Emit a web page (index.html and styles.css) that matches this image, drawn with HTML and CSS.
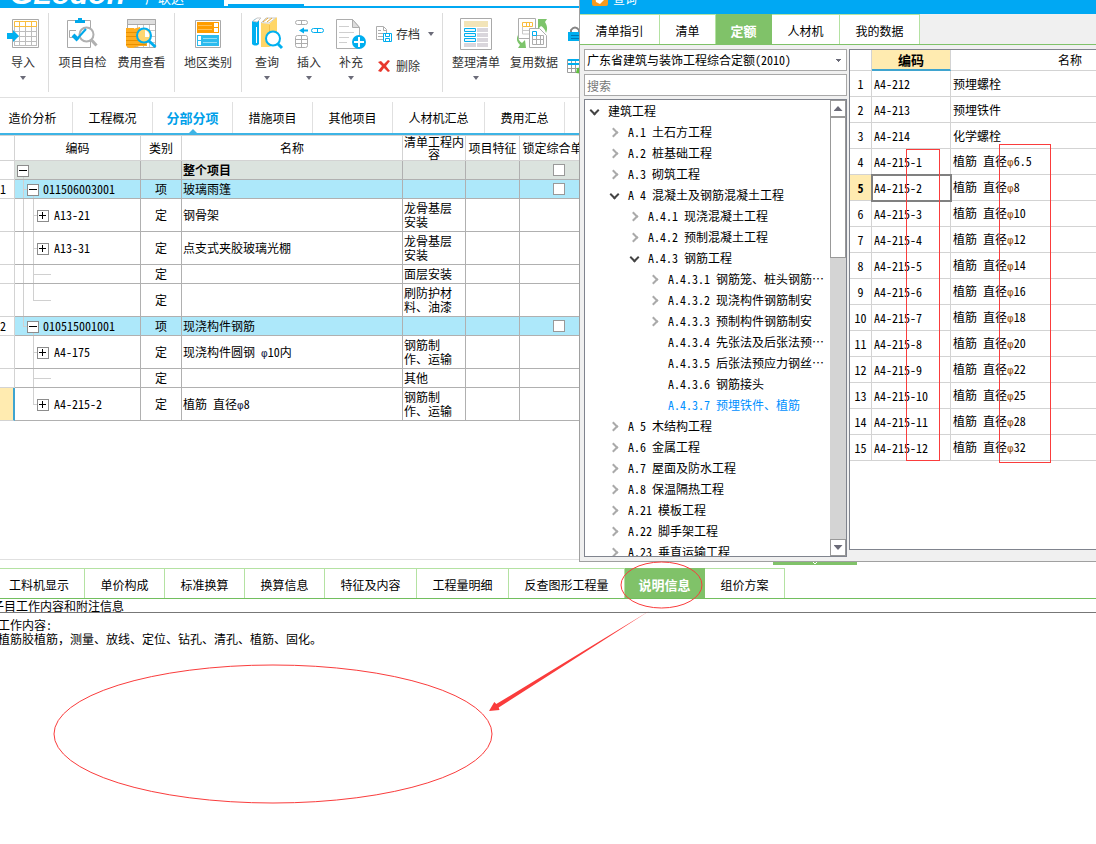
FILE: index.html
```html
<!DOCTYPE html>
<html lang="zh-CN">
<head>
<meta charset="utf-8">
<title>分部分项</title>
<link rel="stylesheet" href="styles.css">
</head>
<body>
<div class="app">
  <header class="titlebar">
    <div class="brand"><span class="brand-latin">GLodon</span><span class="brand-cjk">广联达</span></div>
    <div class="titlebar-notch"></div>
    <div class="titlebar-tab"></div>
    <div class="titlebar-rest"></div>
  </header>

  <div class="toolbar">
    <div class="tool-group group-import">
      <button class="tool"><svg class="tool-icon" viewBox="0 0 36 36"><path fill="#fff" stroke="#a9a9a9" d="M7.500 3.500h26v28h-26z"/><path stroke="#bdbdbd" d="M9 10.500h23M9 15.500h23M9 20.500h23M9 25.500h23M9 29.500h23M9.500 10v20M14.500 10v20M20.500 10v20M26.500 10v20M31.500 10v20"/><path stroke="#f9bd3e" d="M9.500 5.500h22v5h-22zM14.500 5v5M20.500 5v5M26.500 5v5"/><path fill="#00b0f0" d="M2 17h6v-3l6 6-6 6v-3H2z"/></svg><span>导入</span><i class="caret"></i></button>
    </div>
    <div class="tool-group group-check">
      <button class="tool"><svg class="tool-icon" viewBox="0 0 36 36"><path fill="#fff" stroke="#a9a9a9" d="M2.500 4.500h23v27h-23z"/><path fill="#00a8ea" d="M10 7V4h3V2h4v2h3v3z"/><path stroke="#a9a9a9" d="M11 14.500H4.500v7H10"/><circle cx="21.500" cy="18.500" r="7" fill="#fff" stroke="#b0b0b0" stroke-width="2"/><path stroke="#b0b0b0" stroke-width="3" d="m26.500 24 5 5.500"/><path stroke="#00a8ea" stroke-width="2" d="m12 23 9-10"/><path stroke="#00a8ea" stroke-width="4" d="m8 19 5 5"/></svg><span>项目自检</span></button>
      <button class="tool"><svg class="tool-icon" viewBox="0 0 36 36"><path fill="#fff" stroke="#a9a9a9" d="M3.500 3.500h28v28h-28z"/><path fill="#dfdfdf" stroke="#a9a9a9" d="M3.500 3.500h28v5h-28z"/><path stroke="#c8c8c8" d="M4 14.500h27M4 20.500h27M4 26.500h27M13.500 9v22M19.500 9v22M25.500 9v22"/><path fill="#ffad1f" d="M2 12h8v20H5l-3-2zM9 13l7-2v19l-6 1.500zM16 18h7v12h-7z"/><path stroke="#e99000" d="M2 16.500h14M2 20.500h20M2 24.500h20M2 28.500h20"/><circle cx="20" cy="19.500" r="7" fill="#ffd66f" stroke="#00aeef" stroke-width="2"/><path fill="#fff" d="M21 14q5 2 4 7h-4z"/><path stroke="#00aeef" stroke-width="3" d="m25 25 6.500 6"/></svg><span>费用查看</span></button>
    </div>
    <div class="tool-group group-area">
      <button class="tool"><svg class="tool-icon" viewBox="0 0 36 36"><path fill="#fff" stroke="#a9a9a9" d="M5.500 4.500h25v27h-25z"/><path fill="#ff9d00" d="M7 6h22v11H7z"/><path fill="#fff" d="M24 7h4v4h-4zM24 12h4v4h-4z"/><path stroke="#ffc25c" d="M8 9.500h14M8 13.500h14"/><path fill="#2cbbee" d="M7 19h22v11H7z"/><path fill="#fff" d="M8 20h3v4H8zM8 25h3v4H8z"/><path stroke="#90def7" d="M13 22.500h14M13 26.500h14"/></svg><span>地区类别</span></button>
    </div>
    <div class="tool-group group-edit">
      <button class="tool"><svg class="tool-icon" viewBox="0 0 36 36"><path fill="#00b0f0" d="M3 6c1-2 4-4 7-4v26c-2 2-5 2-7 0z"/><path stroke="#fff" d="M7.500 11v16"/><path fill="#fff" stroke="#c8c8c8" d="m4 5 4-3h4l-4 4zM12 7l5-5h10l-7 5z"/><path fill="#ffd668" d="m12 7 8 1 8-7v27l-8 3H12z"/><path stroke="#e3aa35" d="m14 6 5-4M18 6l5-4"/><path stroke="#f0bf4c" d="M20.500 9v20"/><circle cx="24" cy="22.500" r="7" fill="#fff" stroke="#00b0f0" stroke-width="2"/><path stroke="#00b0f0" stroke-width="3" d="m29 28 4 4"/></svg><span>查询</span><i class="caret"></i></button>
      <button class="tool"><svg class="tool-icon" viewBox="0 0 36 36"><g fill="#fff" stroke="#adadad"><rect x="4.500" y="4.500" width="12" height="4" rx="2"/><rect x="4.500" y="19.500" width="12" height="12" rx="2"/><path d="M10.500 4v4M10.500 20v12M5 23.500h12M5 27.500h12"/></g><path fill="#00aeef" d="m8 14.500 5-3v2h4v2h-4v2z"/><rect x="20.500" y="12.500" width="12" height="4" rx="2" fill="#fff" stroke="#00aeef"/><path stroke="#00aeef" d="M26.500 12v5"/></svg><span>插入</span><i class="caret"></i></button>
      <button class="tool"><svg class="tool-icon" viewBox="0 0 36 36"><path fill="#fff" stroke="#adadad" d="M3.500 3.500h16l7 8v21h-23z"/><path fill="#ddd" stroke="#adadad" d="M19.500 3.500v8h7z"/><path stroke="#cfcfcf" d="M6 10.500h10M6 16.500h15M6 21.500h10M6 26.500h8"/><circle cx="26" cy="26" r="7" fill="#00aeef"/><path stroke="#fff" stroke-width="2" d="M21 26h10M26 21v10"/></svg><span>补充</span><i class="caret"></i></button>
      <div class="tool-stack">
        <button class="tool-small"><svg viewBox="0 0 16 16"><path fill="#fff" stroke="#adadad" d="M.5.500h7l3 3v10H.5z"/><path stroke="#adadad" d="M7.500 1v3.500H11M2 4.500h3M2 7.500h6M2 10.500h5"/><path fill="#fff" stroke="#00aeef" d="M7.500 7.500h8v8h-8z"/><path stroke="#00aeef" d="M9.500 8v2.500h4V8M9.500 15v-2.500h4V15"/></svg><span>存档</span><i class="caret"></i></button>
        <button class="tool-small"><svg viewBox="0 0 16 16"><path fill="#e8382d" d="m2 4 3-1 3 3 4-4 2 1-4 5 4 5-2 1-4-4-3 4-3-1 4-5z"/></svg><span>删除</span></button>
      </div>
    </div>
    <div class="tool-group group-data">
      <button class="tool"><svg class="tool-icon" viewBox="0 0 36 36"><path fill="#fff" stroke="#a9a9a9" d="M2.500 2.500h31v31h-31z"/><path fill="#f2e4b8" d="M6 5h24v6H6z"/><path fill="#d9d6dc" d="M19 12h11v4H19zM19 17h11v4H19zM19 22h11v4H19zM19 27h11v4H19zM6 27h12v4H6z"/><path fill="#e7f7fd" stroke="#00aeef" d="M6.500 12.500h11v3h-11zM6.500 17.500h11v3h-11zM6.500 22.500h11v3h-11z"/></svg><span>整理清单</span><i class="caret"></i></button>
      <button class="tool"><svg class="tool-icon" viewBox="0 0 36 36"><path fill="#fff" stroke="#adadad" d="M2.500 2.500h17v20h-17z"/><path stroke="#f9bd3e" d="M6.500 6.500h10v4h-10zM10.500 6v5M13.500 6v5"/><path stroke="#c8c8c8" d="M6.500 11v7h10M6 14.500h10"/><path fill="#fff" stroke="#adadad" d="M13.500 12.500h10l7 7v12h-17z"/><path stroke="#adadad" d="M16.500 19.500h11v9h-11zM16 23.500h11M20.500 19v9M24.500 19v9"/><path stroke="#00aeef" d="M16.500 15.500h4v4h-4z"/><path fill="#7dc46b" d="M22 3h9l-2 3c2 3 3 7 1 11-1-4-3-6-5-7l-3 3zM2 19c0 4 1 6 4 8l3-3 1 8H2l2-3c-3-3-4-6-2-10z"/></svg><span>复用数据</span></button>
      <div class="tool-stack">
        <button class="tool-small" aria-label="锁定"><svg viewBox="0 0 16 16"><path stroke="#858585" stroke-width="2" d="M4 7V4q4-5 8 0v3"/><path fill="#00aeef" d="M1 6h14v9H1z"/><path stroke="#0077b5" d="M4 9.500h8M4 12.500h8"/></svg></button>
        <button class="tool-small" aria-label="表格"><svg viewBox="0 0 16 16"><path fill="#fff" stroke="#9d9d9d" d="M.5 1.500h15v13H.5zM1 6.500h14M1 10.500h14M4.500 2v12M8.500 2v12"/><path stroke="#00aeef" stroke-width="2" d="M1 2h14M1 6h14"/><path fill="#5fbf3d" d="m9 15 1-5 6-1v7z"/></svg></button>
      </div>
    </div>
  </div>

  <nav class="main-tabs">
    <button class="tab">造价分析</button><button class="tab">工程概况</button><button class="tab active">分部分项</button><button class="tab">措施项目</button><button class="tab">其他项目</button><button class="tab wide">人材机汇总</button><button class="tab">费用汇总</button>
  </nav>

  <main class="sheet">
    <table class="bill">
      <colgroup><col class="c-no"><col class="c-code"><col class="c-type"><col class="c-name"><col class="c-work"><col class="c-feat"><col class="c-lock"></colgroup>
      <thead><tr><th></th><th>编码</th><th>类别</th><th>名称</th><th>清单工程内容</th><th>项目特征</th><th>锁定综合单价</th></tr></thead>
      <tbody>
        <tr class="total"><td></td><td class="root"><button class="box" aria-label="折叠"></button></td><td></td><td><b>整个项目</b></td><td></td><td></td><td><input type="checkbox" aria-label="锁定 整个项目"></td></tr>
        <tr class="item"><td>1</td><td class="parent"><button class="box" aria-label="折叠"></button>011506003001</td><td>项</td><td>玻璃雨篷</td><td></td><td></td><td><input type="checkbox" aria-label="锁定 玻璃雨篷"></td></tr>
        <tr class="tall"><td></td><td class="child trunk"><button class="box plus" aria-label="展开"></button>A13-21</td><td>定</td><td>钢骨架</td><td>龙骨基层安装</td><td></td><td></td></tr>
        <tr class="tall"><td></td><td class="child trunk"><button class="box plus" aria-label="展开"></button>A13-31</td><td>定</td><td>点支式夹胶玻璃光棚</td><td>龙骨基层安装</td><td></td><td></td></tr>
        <tr><td></td><td class="leaf trunk"></td><td>定</td><td></td><td>面层安装</td><td></td><td></td></tr>
        <tr class="tall"><td></td><td class="leaf trunk end"></td><td>定</td><td></td><td>刷防护材料、油漆</td><td></td><td></td></tr>
        <tr class="item"><td>2</td><td class="parent end"><button class="box" aria-label="折叠"></button>010515001001</td><td>项</td><td>现浇构件钢筋</td><td></td><td></td><td><input type="checkbox" aria-label="锁定 现浇构件钢筋"></td></tr>
        <tr class="tall"><td></td><td class="child"><button class="box plus" aria-label="展开"></button>A4-175</td><td>定</td><td>现浇构件圆钢 <em>φ</em>10内</td><td>钢筋制作、运输</td><td></td><td></td></tr>
        <tr><td></td><td class="leaf"></td><td>定</td><td></td><td>其他</td><td></td><td></td></tr>
        <tr class="tall current"><td></td><td class="child end"><button class="box plus" aria-label="展开"></button>A4-215-2</td><td>定</td><td>植筋 直径<em>φ</em>8</td><td>钢筋制作、运输</td><td></td><td></td></tr>
      </tbody>
    </table>
  </main>

  <section class="detail">
    <nav class="detail-tabs">
      <button class="dtab">工料机显示</button><button class="dtab">单价构成</button><button class="dtab">标准换算</button><button class="dtab">换算信息</button><button class="dtab">特征及内容</button><button class="dtab">工程量明细</button><button class="dtab">反查图形工程量</button><button class="dtab active">说明信息</button><button class="dtab">组价方案</button>
    </nav>
    <h2 class="detail-title">子目工作内容和附注信息</h2>
    <div class="detail-text">工作内容:<br>植筋胶植筋，测量、放线、定位、钻孔、清孔、植筋、固化。</div>
  </section>
</div>

<div class="grip"><svg viewBox="0 0 8 4"><path fill="none" stroke="#fff" d="m1 0 3 3 3-3"/></svg></div>

<div class="dialog" role="dialog" aria-label="查询">
  <div class="dialog-title"><svg viewBox="0 0 16 16"><rect width="16" height="16" rx="2" fill="#f79a1c"/><path fill="#fff" d="M3 5h4l1 4 3-3 2 3-5 5-4-2z"/></svg><span>查询</span></div>
  <nav class="dialog-tabs">
    <button class="qtab">清单指引</button><button class="qtab">清单</button><button class="qtab active">定额</button><button class="qtab">人材机</button><button class="qtab">我的数据</button>
  </nav>
  <div class="dialog-body">
    <div class="query">
      <select class="field picker" aria-label="定额库"><option>广东省建筑与装饰工程综合定额(2010)</option></select>
      <input class="field" type="text" placeholder="搜索" aria-label="搜索">
      <div class="tree-pane">
        <ul class="tree">
          <li class="open">建筑工程</li>
          <li class="l1 closed">A.1 土石方工程</li>
          <li class="l1 closed">A.2 桩基础工程</li>
          <li class="l1 closed">A.3 砌筑工程</li>
          <li class="l1 open">A 4 混凝土及钢筋混凝土工程</li>
          <li class="l2 closed">A.4.1 现浇混凝土工程</li>
          <li class="l2 closed">A.4.2 预制混凝土工程</li>
          <li class="l2 open">A.4.3 钢筋工程</li>
          <li class="l3 closed">A.4.3.1 钢筋笼、桩头钢筋⋯</li>
          <li class="l3 closed">A.4.3.2 现浇构件钢筋制安</li>
          <li class="l3 closed">A.4.3.3 预制构件钢筋制安</li>
          <li class="l3">A.4.3.4 先张法及后张法预⋯</li>
          <li class="l3">A.4.3.5 后张法预应力钢丝⋯</li>
          <li class="l3">A.4.3.6 钢筋接头</li>
          <li class="l3 chosen">A.4.3.7 预埋铁件、植筋</li>
          <li class="l1 closed">A 5 木结构工程</li>
          <li class="l1 closed">A.6 金属工程</li>
          <li class="l1 closed">A.7 屋面及防水工程</li>
          <li class="l1 closed">A.8 保温隔热工程</li>
          <li class="l1 closed">A.21 模板工程</li>
          <li class="l1 closed">A.22 脚手架工程</li>
          <li class="l1 closed">A.23 垂直运输工程</li>
        </ul>
        <div class="scroll">
          <button class="scroll-btn" aria-label="向上"><i class="up"></i></button>
          <div class="thumb"></div>
          <div class="track"></div>
          <button class="scroll-btn" aria-label="向下"><i class="down"></i></button>
        </div>
      </div>
    </div>
    <div class="result-pane">
      <table class="result">
        <colgroup><col class="r-no"><col class="r-code"><col class="r-name"></colgroup>
        <thead><tr><th></th><th class="sorted">编码</th><th>名称</th></tr></thead>
        <tbody>
          <tr><td>1</td><td>A4-212</td><td>预埋螺栓</td></tr>
          <tr><td>2</td><td>A4-213</td><td>预埋铁件</td></tr>
          <tr><td>3</td><td>A4-214</td><td>化学螺栓</td></tr>
          <tr><td>4</td><td>A4-215-1</td><td>植筋 直径<em>φ</em>6.5</td></tr>
          <tr class="picked"><td>5</td><td>A4-215-2</td><td>植筋 直径<em>φ</em>8</td></tr>
          <tr><td>6</td><td>A4-215-3</td><td>植筋 直径<em>φ</em>10</td></tr>
          <tr><td>7</td><td>A4-215-4</td><td>植筋 直径<em>φ</em>12</td></tr>
          <tr><td>8</td><td>A4-215-5</td><td>植筋 直径<em>φ</em>14</td></tr>
          <tr><td>9</td><td>A4-215-6</td><td>植筋 直径<em>φ</em>16</td></tr>
          <tr><td>10</td><td>A4-215-7</td><td>植筋 直径<em>φ</em>18</td></tr>
          <tr><td>11</td><td>A4-215-8</td><td>植筋 直径<em>φ</em>20</td></tr>
          <tr><td>12</td><td>A4-215-9</td><td>植筋 直径<em>φ</em>22</td></tr>
          <tr><td>13</td><td>A4-215-10</td><td>植筋 直径<em>φ</em>25</td></tr>
          <tr><td>14</td><td>A4-215-11</td><td>植筋 直径<em>φ</em>28</td></tr>
          <tr><td>15</td><td>A4-215-12</td><td>植筋 直径<em>φ</em>32</td></tr>
        </tbody>
      </table>
    </div>
  </div>
</div>

<svg class="marks" width="1096" height="844" viewBox="0 0 1096 844" aria-hidden="true">
  <g fill="none" stroke="#fa3c3c">
    <rect x="906.500" y="149.500" width="33" height="311"/>
    <rect x="999.500" y="144.500" width="51" height="318"/>
    <ellipse cx="661.500" cy="585" rx="40.500" ry="23"/>
    <ellipse cx="273" cy="734" rx="219" ry="69"/>
  </g>
  <path fill="#fa3c3c" d="m489 711 5.300-9 2 2L650 610.500 498.700 707.500l.8 2.500z"/>
</svg>
</body>
</html>
```

FILE: styles.css
```css
*, *::before, *::after { box-sizing: border-box; }

body {
  margin: 0;
  background: #fff;
  color: #000;
  font: 12px/14px "Noto Sans Mono CJK SC", "Noto Sans CJK SC", sans-serif;
  overflow: hidden;
}

button, input, select { font: inherit; color: inherit; }
button { margin: 0; padding: 0; border: 0; background: none; white-space: nowrap; }
table { border-collapse: separate; border-spacing: 0; table-layout: fixed; }
em { font: 11px/12px "DejaVu Sans Mono", monospace; }

.app { display: flex; flex-direction: column; min-height: 100vh; }

/* title bar */
.titlebar { display: flex; height: 8px; overflow: hidden; border-bottom: 2px solid #00a8f3; flex: none; }
.brand { display: flex; align-items: flex-end; gap: 20px; width: 224px; padding-left: 10px; background: #00a8f3; color: #fff; }
.brand-latin { font: italic bold 30px/24px "Liberation Sans", sans-serif; }
.brand-cjk { font-size: 13px; line-height: 16px; }
.titlebar-notch { width: 4px; }
.titlebar-tab { width: 76px; border-bottom: 2px solid #00a8f3; }
.titlebar-rest { flex: 1; }

/* toolbar */
.toolbar { display: flex; height: 90px; padding: 5px 0; border-bottom: 1px solid #e0e0e0; color: #333; font-family: "Noto Sans CJK SC", sans-serif; flex: none; overflow: hidden; }
.toolbar svg { fill: none; }
.tool-group { display: flex; height: 79px; padding-top: 3px; border-right: 1px solid #dcdcdc; }
.group-import { width: 49px; }
.group-check { width: 126px; padding-left: 4px; }
.group-area { width: 67px; }
.group-edit { width: 201px; padding-left: 4px; }
.group-data { padding-left: 4px; }
.tool { display: flex; flex-direction: column; align-items: center; line-height: 20px; width: 59px; }
.group-import .tool { width: 46px; }
.group-area .tool { width: 66px; }
.group-edit .tool { width: 42px; }
.group-data .tool { width: 58px; }
.tool-icon { width: 36px; height: 36px; flex: none; }
.caret { width: 6px; height: 4px; margin-top: 4px; background: #6b6b78; clip-path: polygon(0 0, 100% 0, 50% 100%); flex: none; }
.tool-stack { display: flex; flex-direction: column; gap: 12px; padding: 8px 0 0 4px; }
.tool-small { display: flex; align-items: center; gap: 4px; height: 20px; }
.tool-small svg { width: 16px; height: 16px; flex: none; }
.tool-small .caret { margin: 0 0 0 4px; }

/* main tabs */
.main-tabs { display: flex; height: 37px; padding-top: 4px; margin-left: -7px; border-bottom: 2px solid #3db4e5; flex: none; }
.tab { position: relative; width: 80px; border-right: 1px solid #e0e0e0; }
.tab.wide { width: 92px; }
.tab.active { color: #00a0e9; font-size: 13px; font-weight: bold; }
.tab.active::after { content: ""; position: absolute; left: 36px; bottom: 0; width: 8px; height: 4px; background: #3db4e5; clip-path: polygon(50% 0, 100% 100%, 0 100%); }

/* bill table */
.sheet { height: 425px; border-bottom: 1px solid #e0e0e0; flex: none; overflow: hidden; }
.bill { width: 598px; }
.c-no { width: 15px; }
.c-code { width: 126px; }
.c-type { width: 41px; }
.c-name { width: 221px; }
.c-work { width: 63px; }
.c-feat { width: 54px; }
.c-lock { width: 78px; }
.bill th { height: 26px; padding: 0; border: solid #d3d3d3; border-width: 1px 1px 1px 0; font-weight: normal; line-height: 12px; white-space: nowrap; }
.bill th:nth-child(5) { white-space: normal; }
.bill td { height: 19px; padding: 0 1px; border: solid #b0b0b0; border-width: 0 1px 1px 0; }
.bill .tall td { height: 33px; }
.bill td:nth-child(1) { padding: 0; border-color: #d3d3d3; background-color: #fff; }
.bill td:nth-child(3), .bill td:nth-child(7) { text-align: center; }
.bill td:nth-child(5) { padding-right: 10px; }
.bill .total td { background-color: #dbe3de; }
.bill .item td { background-color: #ade8fa; }
.bill .item td:nth-child(1), .bill .total td:nth-child(1) { background-color: #fff; }
.bill .current td:nth-child(1) { background-color: #ffebb0; border-right: 2px solid #3fa4cf; }
.bill input { display: block; appearance: none; width: 12px; height: 12px; margin: 0 auto; border: 1px solid #999; background: #fff; }
.bill em { color: #1c2c50; }

.box { width: 12px; height: 12px; margin-right: 4px; border: 1px solid #8c8c8c; vertical-align: -1px;
  background: linear-gradient(#000, #000) 1px 4px / 8px 1px no-repeat #fff; }
.box.plus { margin-right: 5px; background: linear-gradient(#000, #000) 1px 4px / 7px 1px no-repeat, linear-gradient(#000, #000) 4px 1px / 1px 7px no-repeat #fff; }

/* hierarchy guide lines inside the code column */
.bill td.root, .bill td.parent, .bill td.child, .bill td.leaf {
  --line: linear-gradient(#d0d0d0, #d0d0d0);
  --outer: 0; --inner: 100%; --stub: 4px;
  background-image: var(--line), var(--line), var(--line);
  background-repeat: no-repeat;
  background-position: 8px 0, 18px 0, 18px 50%;
  background-size: 1px var(--outer), 1px var(--inner), var(--stub) 1px;
}
.bill td.root { padding-left: 2px; background-image: var(--line); background-position: 8px 100%; background-size: 1px 4px; }
.bill td.parent { padding-left: 12px; --outer: 100%; --inner: 5px; background-position: 8px 0, 18px 100%, 8px 50%; }
.bill td.parent.end { --outer: 50%; }
.bill td.child { padding-left: 22px; }
.bill td.leaf { --stub: 18px; }
.bill td.trunk { --outer: 100%; }
.bill td.child.end, .bill td.leaf.end { --inner: 50%; }

/* detail pane */
.detail { padding-top: 8px; flex: 1; }
.detail-tabs { display: flex; height: 31px; border-bottom: 1px solid #72bf5f; }
.dtab { width: 80px; border: solid #b4e2a2; border-width: 1px 1px 0 0; padding-top: 2px; }
.dtab:nth-child(1) { width: 85px; padding-right: 6px; }
.dtab:nth-child(5), .dtab:nth-child(6) { width: 92px; }
.dtab:nth-child(7) { width: 116px; }
.dtab.active { background: #80c269; color: #fff; font-size: 13px; font-weight: bold; border-color: #80c269; }
.detail-title { height: 14px; margin: 0 0 0 -8px; font-size: 12px; font-weight: normal; line-height: 13px; border-bottom: 1px solid #777; }
.detail-text { margin-left: -2px; padding-top: 5px; }

/* query window */
.grip { position: absolute; left: 773px; top: 561px; width: 84px; height: 4px; background: #80c269; }
.grip svg { display: block; width: 8px; height: 4px; margin: 0 auto; }
.dialog { position: absolute; left: 579px; right: 0; top: 0; height: 562px; display: flex; flex-direction: column; background: #f0f0f0; border: solid #a0a0a0; border-width: 0 0 1px 1px; overflow: hidden; }
.dialog-title { display: flex; align-items: flex-end; gap: 5px; height: 14px; padding: 0 12px 8px; background: #00a8f3; color: #fff; flex: none; }
.dialog-title svg { width: 16px; height: 16px; flex: none; }
.dialog-title span { line-height: 14px; }
.dialog-tabs { display: flex; height: 31px; border-bottom: 1px solid #80c269; flex: none; }
.qtab { width: 56px; padding-top: 2px; background: #fff; border: solid #b4e2a2; border-width: 1px 1px 0 0; }
.qtab:nth-child(1), .qtab:nth-child(5) { width: 80px; }
.qtab:nth-child(4) { width: 68px; }
.qtab.active { background: #80c269; color: #fff; font-size: 13px; font-weight: bold; border-color: #80c269; }
.dialog-body { display: flex; gap: 2px; flex: 1; min-height: 0; padding: 4px 0 4px 4px; }
.query { display: flex; flex-direction: column; gap: 3px; width: 263px; flex: none; }
.field { display: block; width: 100%; height: 22px; padding: 0 2px; border: 1px solid #a8a8a8; border-radius: 0; background: #fff; outline: 0; flex: none; }
.field::placeholder { color: #777; opacity: 1; }
.picker { appearance: none; background: conic-gradient(from 315deg at 50% 100%, #6b6b78 90deg, transparent 0) right 5px center / 5px 3px no-repeat #fff; }
.tree-pane { display: flex; flex: 1; min-height: 0; border: 1px solid #80848e; background: #fff; overflow: hidden; }
.tree { flex: 1; margin: 0; padding: 0; list-style: none; overflow: hidden; }
.tree li { height: 21px; padding-left: 23px; line-height: 21px; white-space: pre; }
.tree .l1 { padding-left: 43px; }
.tree .l2 { padding-left: 63px; }
.tree .l3 { padding-left: 83px; }
.tree .chosen { color: #0090ff; }
.tree li::before { content: ""; display: inline-block; width: 7px; height: 7px; margin: 0 11px 2px -18px; vertical-align: middle; transform: rotate(45deg); }
.tree .open::before { border: solid #444; border-width: 0 2px 2px 0; margin: 0 10px 5px -17px; }
.tree .closed::before { border: solid #aaa; border-width: 2px 2px 0 0; }
.scroll { display: flex; flex-direction: column; width: 16px; flex: none; }
.scroll-btn { display: grid; place-items: center; height: 17px; border: 1px solid #999; background: #fff; flex: none; }
.up, .down { width: 9px; height: 5px; background: #6b6b78; clip-path: polygon(50% 0, 100% 100%, 0 100%); }
.down { clip-path: polygon(0 0, 100% 0, 50% 100%); }
.thumb { height: 141px; border: 1px solid #999; background: #fff; }
.track { flex: 1; background: #d4d4d4; }

.result-pane { flex: 1; min-width: 0; margin-bottom: 7px; border: solid #80848e; border-width: 1px 0 1px 1px; background: #fff; overflow: hidden; }
.result { width: 340px; }
.r-no { width: 22px; }
.r-code { width: 79px; }
.r-name { width: 239px; }
.result th { height: 21px; padding: 0; font-weight: normal; border: solid #d3d3d3; border-width: 0 1px 1px 0; }
.result .sorted { background: #ffebb0; font-size: 13px; font-weight: bold; border-bottom: 2px solid #3fa4cf; }
.result td { height: 26px; padding: 0 2px; border: solid #d3d3d3; border-width: 0 1px 1px 0; white-space: pre; }
.result td:first-child { padding: 0; text-align: center; }
.result em { color: #9a5208; }
.picked td:first-child { background: #ffebb0; font-weight: bold; }
.picked td:nth-child(2) { outline: 2px solid #808080; outline-offset: -1px; }

.marks { position: absolute; left: 0; top: 0; pointer-events: none; }
```
